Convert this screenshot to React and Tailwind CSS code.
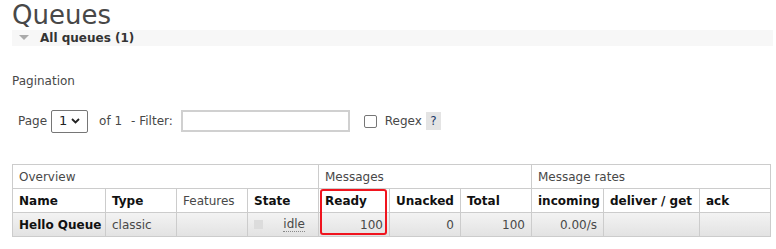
export default function App() {
  const cols = [93, 71, 71, 71, 71, 71, 71, 72, 96, 71]
  return (
    <div className="w-[776px] h-[249px] bg-white text-[#484848] font-['DejaVu_Sans',Verdana,sans-serif] text-[12px] overflow-hidden">
      <h1 className="pl-[12px] pt-0 text-[26px] leading-[30px] text-[#484848]">Queues</h1>

      <div className="ml-[12px] mr-[3px] h-[16px] bg-[#f7f7f7] flex items-center">
        <svg width="10" height="6" viewBox="0 0 10 6" className="ml-[7px] mr-[11px]">
          <polygon points="0,0 10,0 5,5" fill="#aaa" />
        </svg>
        <span className="font-bold text-[#333] text-[12px]">All queues (1)</span>
      </div>

      <div className="pl-[12px] mt-[26px] text-[12px]">Pagination</div>

      <div className="flex items-center pl-[18px] mt-[19px] h-[24px]">
        <span>Page</span>
        <div className="ml-[4px] w-[37px] h-[23px] border border-[#767676] rounded-[2px] flex items-center justify-between px-[7px] text-[#222] text-[13px]">
          <span>1</span>
          <svg width="9" height="6" viewBox="0 0 9 6">
            <polyline points="1,1 4.5,4.5 8,1" fill="none" stroke="#222" strokeWidth="1.8" />
          </svg>
        </div>
        <span className="ml-[11px]">of 1</span>
        <span className="ml-[9px]">- Filter:</span>
        <div className="ml-[8px] w-[169px] h-[22px] border-2 border-[#d0d0d0] bg-white"></div>
        <div className="ml-[14px] w-[13px] h-[13px] border border-[#767676] rounded-[2px]"></div>
        <span className="ml-[8px]">Regex</span>
        <span className="ml-[4px] w-[15px] h-[18px] bg-[#e4e4e4] flex items-center justify-center text-[#1a3a6a]">?</span>
      </div>

      <div className="relative ml-[12px] mt-[31px] w-[758px]">
        <table className="border-collapse table-fixed w-[758px] whitespace-nowrap">
          <colgroup>
            {cols.map((w, i) => (
              <col key={i} style={{ width: w }} />
            ))}
          </colgroup>
          <tbody>
            <tr className="h-[24px]">
              <td colSpan={4} className="border border-[#ccc] px-[6px] text-[#484848]">Overview</td>
              <td colSpan={3} className="border border-[#ccc] px-[6px] text-[#484848]">Messages</td>
              <td colSpan={3} className="border border-[#ccc] px-[6px] text-[#484848]">Message rates</td>
            </tr>
            <tr className="h-[24px] font-bold text-[#111]">
              <td className="border border-[#ccc] px-[6px]">Name</td>
              <td className="border border-[#ccc] px-[6px]">Type</td>
              <td className="border border-[#ccc] px-[6px] font-normal text-[#484848]">Features</td>
              <td className="border border-[#ccc] px-[6px]">State</td>
              <td className="border border-[#ccc] px-[6px]">Ready</td>
              <td className="border border-[#ccc] px-[6px]">Unacked</td>
              <td className="border border-[#ccc] px-[6px]">Total</td>
              <td className="border border-[#ccc] px-[6px]">incoming</td>
              <td className="border border-[#ccc] px-[6px]">deliver / get</td>
              <td className="border border-[#ccc] px-[6px]">ack</td>
            </tr>
            <tr className="h-[24px] bg-gradient-to-b from-[#f3f3f3] to-[#e2e2e2]">
              <td className="border border-[#ccc] px-[6px] font-bold text-[#111]">Hello Queue</td>
              <td className="border border-[#ccc] px-[6px]">classic</td>
              <td className="border border-[#ccc] px-[6px]"></td>
              <td className="border border-[#ccc] px-[6px]">
                <div className="flex items-center justify-between">
                  <span className="w-[9px] h-[9px] bg-[#dcdcdc]"></span>
                  <span className="border-b border-dotted border-[#888] leading-[13px] mr-[7px]">idle</span>
                </div>
              </td>
              <td className="border border-[#ccc] px-[6px] text-right">100</td>
              <td className="border border-[#ccc] px-[6px] text-right">0</td>
              <td className="border border-[#ccc] px-[6px] text-right">100</td>
              <td className="border border-[#ccc] px-[6px] text-right">0.00/s</td>
              <td className="border border-[#ccc] px-[6px]"></td>
              <td className="border border-[#ccc] px-[6px]"></td>
            </tr>
          </tbody>
        </table>
        <div className="absolute left-[308px] top-[25px] w-[67px] h-[46px] border-2 border-[#f0141e] rounded-[3px]"></div>
      </div>
    </div>
  )
}
